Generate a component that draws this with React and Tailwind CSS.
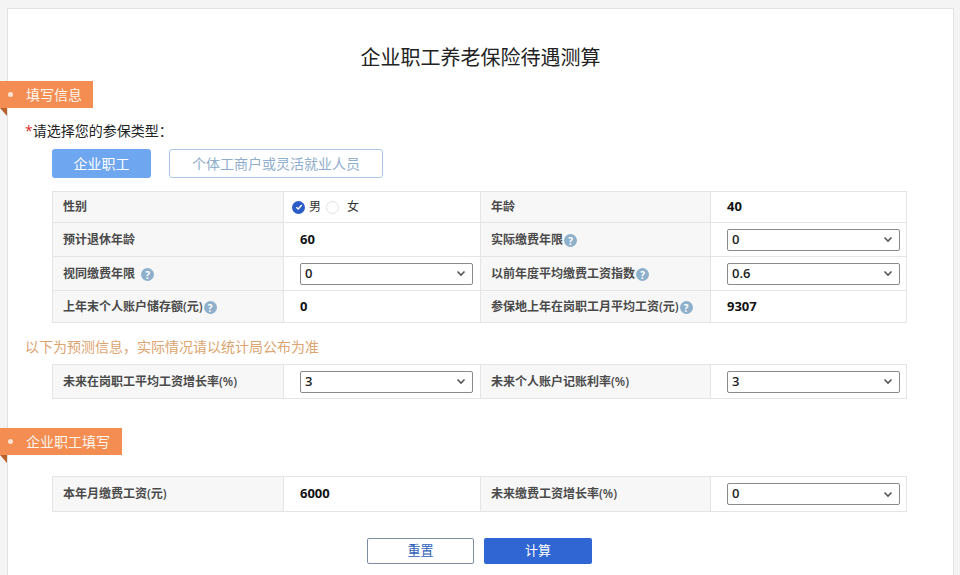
import { useState } from "react"

const font = "font-['Open_Sans','Noto_Sans_CJK_SC',sans-serif]"

function Help({ gap }) {
    return (
        <span className={`inline-flex items-center justify-center w-[13px] h-[13px] rounded-full bg-[#8eb0cb] text-white text-[10px] font-bold leading-none align-[-1px] ${gap ? "ml-[6px]" : "ml-[1px]"}`}>?</span>
    )
}

function Select({ value }) {
    return (
        <div className="flex items-center justify-between w-[173px] h-[22px] border border-[#8a8a8a] rounded-[2px] bg-white pl-[4px] pr-[6px] text-[13px] font-semibold text-[#222]">
            <span>{value}</span>
            <svg width="10" height="7" viewBox="0 0 10 7" fill="none">
                <path d="M1.5 1.5 L5 5 L8.5 1.5" stroke="#555" strokeWidth="1.6" />
            </svg>
        </div>
    )
}

function Tag({ text, w }) {
    return (
        <div className="-ml-[8px]">
            <div className={`flex items-center h-[27px] bg-[#f38d52] text-[#fff5ea] text-[14px] ${w}`}>
                <span className="w-[5px] h-[5px] rounded-full bg-[#fde3cf] ml-[8px] mr-[13px]"></span>
                {text}
            </div>
            <div className="w-0 h-0 border-t-[8px] border-t-[#b9602d] border-l-[7px] border-l-transparent"></div>
        </div>
    )
}

const Label = ({ children }) => (
    <td className="bg-[#f7f7f7] border border-[#e4e4e4] pl-[10px] text-[12px] font-semibold text-[#4a4a4a] whitespace-nowrap">{children}</td>
)
const Val = ({ children }) => (
    <td className="border border-[#e4e4e4] pl-[16px] text-[13px] font-bold text-[#111]">{children}</td>
)

function Grid({ rows }) {
    return (
        <table className="ml-[44px] w-[854px] border-collapse table-fixed">
            <colgroup>
                <col className="w-[231px]" />
                <col className="w-[197px]" />
                <col className="w-[230px]" />
                <col className="w-[196px]" />
            </colgroup>
            <tbody>
                {rows.map((r, i) => (
                    <tr key={i} className={r.h}>
                        <Label>{r.a}</Label>
                        <Val>{r.b}</Val>
                        <Label>{r.c}</Label>
                        <Val>{r.d}</Val>
                    </tr>
                ))}
            </tbody>
        </table>
    )
}

export default function App() {
    const [male, setMale] = useState(true)

    const gender = (
        <div className="flex items-center gap-[4px] font-normal text-[12px] text-[#333] -ml-[8px]">
            <span onClick={() => setMale(true)} className={`flex items-center justify-center w-[13px] h-[13px] rounded-full ${male ? "bg-[#2b5cc6]" : "border border-[#ddd]"}`}>
                {male && (
                    <svg width="8" height="8" viewBox="0 0 8 8" fill="none">
                        <path d="M1.3 4.2 L3.2 6 L6.7 2" stroke="#fff" strokeWidth="1.4" />
                    </svg>
                )}
            </span>
            <span>男</span>
            <span onClick={() => setMale(false)} className={`flex items-center justify-center w-[13px] h-[13px] rounded-full ml-[1px] ${!male ? "bg-[#2b5cc6]" : "border border-[#e2e2e2]"}`}></span>
            <span className="ml-[4px]">女</span>
        </div>
    )

    return (
        <section className={`min-h-screen bg-[#f4f4f4] pt-[8px] pl-[7px] ${font}`}>
            <div className="w-[947px] min-h-[600px] bg-white border border-[#e2e2e2]">

                <h1 className="text-center text-[20px] leading-[28px] text-[#222] mt-[35px]">企业职工养老保险待遇测算</h1>

                <div className="mt-[9px]">
                    <Tag text="填写信息" w="w-[93px]" />
                </div>

                <p className="ml-[17px] mt-[5px] text-[14px] leading-[20px] text-[#222]">
                    <span className="text-[#e0302c]">*</span>请选择您的参保类型：
                </p>

                <div className="flex gap-[18px] ml-[44px] mt-[8px]">
                    <button className="w-[99px] h-[29px] rounded-[3px] bg-[#6ea6ef] text-white text-[14px]">企业职工</button>
                    <button className="w-[214px] h-[29px] rounded-[3px] bg-white border border-[#a9c6e4] text-[#8fadcc] text-[14px]">个体工商户或灵活就业人员</button>
                </div>

                <div className="mt-[13px]">
                    <Grid rows={[
                        { h: "h-[31px]", a: "性别", b: gender, c: "年龄", d: "40" },
                        { h: "h-[34px]", a: "预计退休年龄", b: "60", c: <>实际缴费年限<Help /></>, d: <Select value="0" /> },
                        { h: "h-[34px]", a: <>视同缴费年限<Help gap /></>, b: <Select value="0" />, c: <>以前年度平均缴费工资指数<Help /></>, d: <Select value="0.6" /> },
                        { h: "h-[32px]", a: <>上年末个人账户储存额(元)<Help /></>, b: "0", c: <>参保地上年在岗职工月平均工资(元)<Help /></>, d: "9307" },
                    ]} />
                </div>

                <p className="ml-[17px] mt-[14px] text-[14px] leading-[20px] text-[#dca470]">以下为预测信息，实际情况请以统计局公布为准</p>

                <div className="mt-[7px]">
                    <Grid rows={[
                        { h: "h-[34px]", a: "未来在岗职工平均工资增长率(%)", b: <Select value="3" />, c: "未来个人账户记账利率(%)", d: <Select value="3" /> },
                    ]} />
                </div>

                <div className="mt-[29px]">
                    <Tag text="企业职工填写" w="w-[122px]" />
                </div>

                <div className="mt-[13px]">
                    <Grid rows={[
                        { h: "h-[35px]", a: "本年月缴费工资(元)", b: "6000", c: "未来缴费工资增长率(%)", d: <Select value="0" /> },
                    ]} />
                </div>

                <div className="flex justify-center gap-[10px] mt-[26px] pr-[2px]">
                    <button className="w-[107px] h-[26px] rounded-[2px] bg-white border border-[#7d8fa8] text-[#2f5fb8] text-[13px]">重置</button>
                    <button className="w-[108px] h-[26px] rounded-[2px] bg-[#2f66d3] text-white text-[13px]">计算</button>
                </div>

            </div>
        </section>
    )
}
